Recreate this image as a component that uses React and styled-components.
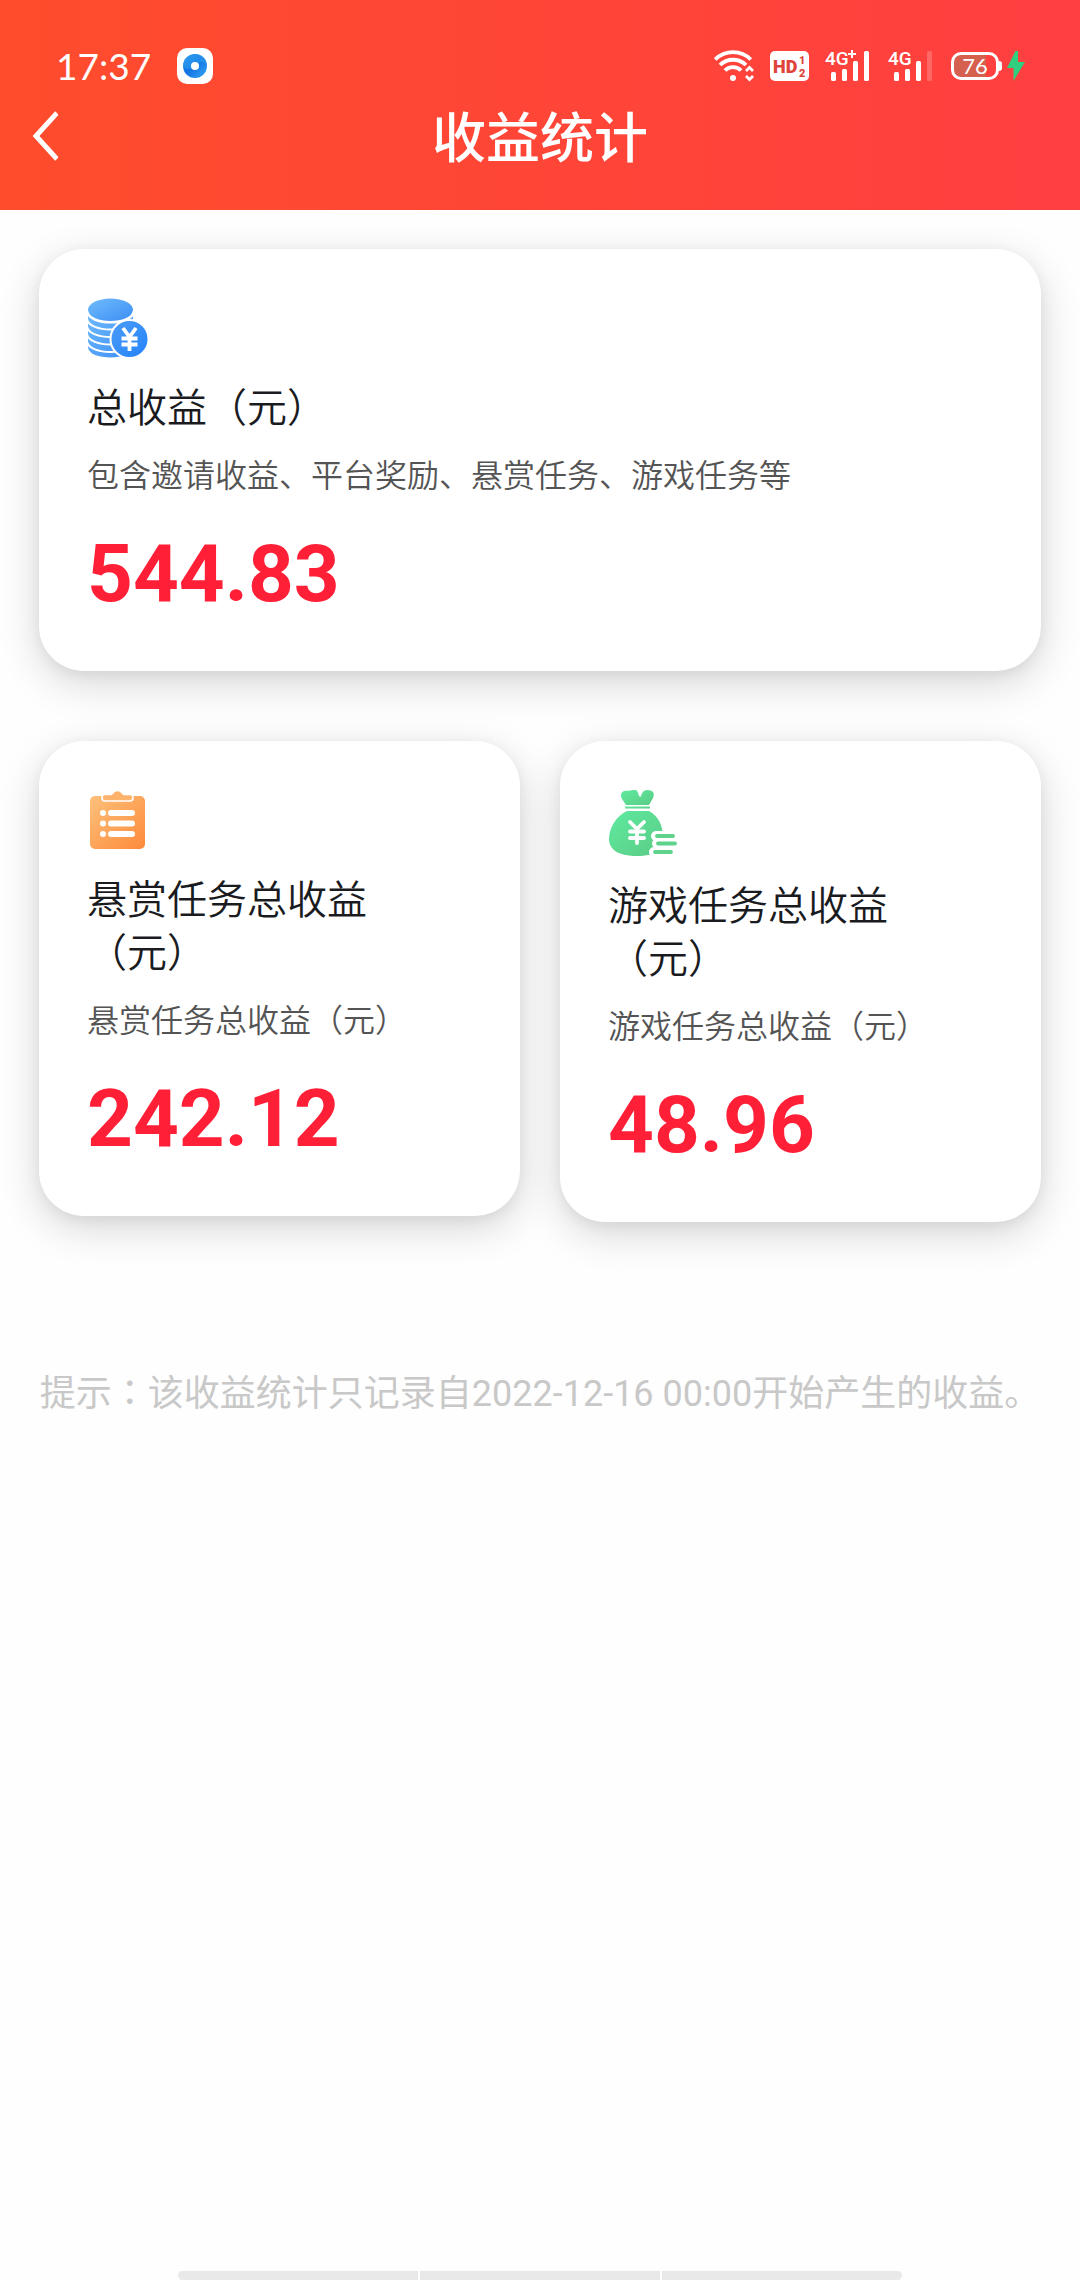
import React from "react";
import styled, { createGlobalStyle } from "styled-components";

const GlobalStyle = createGlobalStyle`
  * {
    box-sizing: border-box;
  }
  body {
    margin: 0;
    background: #fefefe;
    font-family: Roboto, "Noto Sans CJK SC", sans-serif;
    text-spacing-trim: space-all;
  }
`;

const Page = styled.div`
  display: flex;
  flex-direction: column;
  min-height: 100vh;
`;

const Header = styled.header`
  padding: 44px 0 26px;
  color: #fff;
  background: linear-gradient(90deg, #ff4c2c, #ff3f41);
`;

const StatusBar = styled.div`
  display: flex;
  align-items: center;
  justify-content: space-between;
  height: 44px;
  padding: 0 54px 0 56px;
`;

const StatusGroup = styled.div`
  display: flex;
  align-items: center;
  gap: ${(p) => p.$gap}px;
`;

const Clock = styled.time`
  font-family: Lato, sans-serif;
  font-size: 37px;
  line-height: 44px;
`;

const Battery = styled.div`
  display: flex;
  align-items: center;
`;

const BatteryBody = styled.span`
  display: flex;
  align-items: center;
  justify-content: center;
  width: 48px;
  height: 28px;
  border: 3px solid #fff;
  border-radius: 10px;
  background: linear-gradient(90deg, #d5604f 76%, transparent 76%);
  font-family: Lato, sans-serif;
  font-size: 22px;
  line-height: 22px;
`;

const BatteryTip = styled.span`
  width: 3px;
  height: 10px;
  margin-right: 4px;
  border-radius: 0 3px 3px 0;
  background: #fff;
`;

const NavBar = styled.nav`
  display: grid;
  grid-template-columns: 96px 1fr 96px;
  align-items: center;
  height: 96px;
`;

const BackButton = styled.button`
  display: flex;
  align-items: center;
  height: 96px;
  padding: 0 0 0 30px;
  border: 0;
  background: none;
  color: inherit;
`;

const PageTitle = styled.h1`
  margin: 0;
  padding-top: 8px;
  font-size: 54px;
  font-weight: 500;
  line-height: 72px;
  text-align: center;
`;

const Content = styled.main`
  display: flex;
  flex-direction: column;
  gap: 70px;
  padding: 39px 39px 0;
`;

const CardRow = styled.div`
  display: grid;
  grid-template-columns: 1fr 1fr;
  align-items: start;
  gap: 40px;
`;

const Card = styled.section`
  display: flex;
  flex-direction: column;
  align-items: flex-start;
  padding: 49px 48px;
  border-radius: 45px;
  background: #fff;
  box-shadow: 0 12px 40px rgba(0, 0, 0, 0.16), 0 3px 14px rgba(0, 0, 0, 0.06);
`;

const CardTitle = styled.h2`
  margin: 24px 0 20px;
  color: #1a1b1e;
  font-size: 40px;
  font-weight: 350;
  line-height: 53px;
`;

const CardText = styled.p`
  margin: 0 0 29px;
  color: #545454;
  font-size: 32px;
  font-weight: 350;
  line-height: 42px;
`;

const Amount = styled.strong`
  color: #ff2038;
  font-size: 80px;
  font-weight: 700;
  line-height: 96px;
`;

const Tip = styled.p`
  margin: 74px 0 0;
  color: #c8c8c8;
  font-size: 36px;
  line-height: 48px;
  text-align: center;
  white-space: nowrap;
`;

const TipColon = styled.span`
  font-family: "Noto Sans CJK TC", sans-serif;
`;

const GestureBar = styled.div`
  display: flex;
  gap: 2px;
  width: 67%;
  height: 9px;
  margin: auto auto 0;
  border-radius: 6px;
  overflow: hidden;
`;

const GestureSegment = styled.span`
  flex: 1;
  background: #e9e9e9;
`;

const AppBadge = () => (
  <svg width="36" height="36" viewBox="0 0 36 36" aria-hidden="true">
    <defs>
      <linearGradient id="badge" x1="0" y1="0" x2="1" y2="1">
        <stop offset="0" stopColor="#2b9af3" />
        <stop offset="0.45" stopColor="#1173e0" />
        <stop offset="1" stopColor="#35a5f5" />
      </linearGradient>
    </defs>
    <rect width="36" height="36" rx="10" fill="#fff" />
    <circle cx="18" cy="18" r="12" fill="url(#badge)" />
    <path d="M6 18a12 12 0 0 1 12-12c7 0 11 5 12 10-4-3-8-3-12 2-4 4-8 4-12 0z" fill="#2f9cf0" opacity=".6" />
    <circle cx="18" cy="18" r="4" fill="#fff" />
  </svg>
);

const WifiIcon = () => (
  <svg width="40" height="32" viewBox="0 0 40 32" fill="none" stroke="#fff" strokeWidth="3.8" aria-hidden="true">
    <path d="M1.200 9.500C11-.300 27-.300 36.800 9.500" />
    <path d="M6 15C13 8 25 8 32 15" />
    <path d="M11 20.500c4-4.500 12-4.500 16 0" />
    <circle cx="19" cy="28" r="3" fill="#fff" stroke="none" />
    <path d="M32 21l3.500-3.500L39 21M32 26l3.500 3.500L39 26" strokeWidth="2.800" />
  </svg>
);

const HdIcon = () => (
  <svg width="39" height="30" viewBox="0 0 39 30" role="img" aria-label="HD 1 2">
    <rect width="39" height="30" rx="5" fill="#fff" />
    <g fill="#e0433a" fontFamily="Roboto, sans-serif" fontWeight="900">
      <text x="3" y="22" fontSize="18">HD</text>
      <text x="29" y="13" fontSize="11">1</text>
      <text x="29" y="26" fontSize="11">2</text>
    </g>
  </svg>
);

const SignalIcon = ({ label, last }) => (
  <svg width="47" height="40" viewBox="0 -4 47 40" role="img" aria-label={label}>
    <g fill="#fff">
      <rect x="6" y="22" width="5" height="9" rx="1.500" />
      <rect x="17" y="19" width="5" height="12" rx="1.500" />
      <rect x="28" y="11" width="5" height="20" rx="1.500" />
      <rect x="39" y="1" width="5" height="30" rx="1.500" opacity={last} />
      <text x="0" y="15" fontFamily="Roboto, sans-serif" fontSize="19" fontWeight="500">
        {label.slice(0, 2)}
      </text>
      {label.length > 2 && <path d="M26 0h2v3h3v2h-3v3h-2v-3h-3v-2h3z" />}
    </g>
  </svg>
);

const BoltIcon = () => (
  <svg width="20" height="32" viewBox="0 0 20 32" aria-hidden="true">
    <path d="M9.500 1L1 18h6.500v13L19 12h-7V1z" fill="#2fcf7f" />
  </svg>
);

const BackIcon = () => (
  <svg width="28" height="50" viewBox="0 0 28 50" fill="none" stroke="#fff" strokeWidth="5" aria-hidden="true">
    <path d="M27 2L6 25l21 23" />
  </svg>
);

const CoinsIcon = () => (
  <svg width="62" height="60" viewBox="-1 0 62 60" aria-hidden="true">
    <defs>
      <linearGradient id="coins" x1="0" y1="0" x2="1" y2="1">
        <stop offset="0" stopColor="#71bcfb" />
        <stop offset="1" stopColor="#3b8df5" />
      </linearGradient>
      <linearGradient id="coin" x1="0" y1="0" x2="1" y2="1">
        <stop offset="0" stopColor="#4c9df6" />
        <stop offset="1" stopColor="#2382fb" />
      </linearGradient>
    </defs>
    <path d="M0 12h45v37c0 14-45 14-45 0z" fill="url(#coins)" />
    <ellipse cx="22.500" cy="12" rx="22.500" ry="11.500" fill="url(#coins)" />
    <g fill="none" stroke="#fff" strokeWidth="2.600">
      <path d="M-1 13c2 15 45 15 47 0" />
      <path d="M-1 21c2 14 45 14 47 0" strokeWidth="2" />
      <path d="M-1 28.500c2 14 45 14 47 0" strokeWidth="2" />
      <path d="M-1 36c2 14 45 14 47 0" strokeWidth="2" />
      <path d="M-1 43.500c2 14 45 14 47 0" strokeWidth="2" />
    </g>
    <circle cx="41.500" cy="41" r="19" fill="url(#coin)" stroke="#fff" strokeWidth="2" />
    <path d="M35 30l6.500 9 6.500-9M41.500 39v14M33.500 40.500h16M33.500 46.500h16" fill="none" stroke="#fff" strokeWidth="3.800" />
  </svg>
);

const ClipboardIcon = () => (
  <svg width="62" height="60" viewBox="-1 0 62 60" aria-hidden="true">
    <defs>
      <linearGradient id="board" x1="0" y1="0" x2="1" y2="1">
        <stop offset="0" stopColor="#fdc17c" />
        <stop offset="1" stopColor="#fd8a3a" />
      </linearGradient>
    </defs>
    <rect x="2" y="6" width="55" height="53" rx="5" fill="url(#board)" />
    <path
      d="M17 4.500h6c1.500 0 2-4 6.500-4s5 4 6.500 4h6c4 0 4 6.500 0 6.500H17c-4 0-4-6.500 0-6.500z"
      fill="#fdb36c"
      stroke="#fff"
      strokeWidth="1.600"
    />
    <g fill="#fff">
      <circle cx="15" cy="23" r="3" />
      <circle cx="15" cy="33.500" r="3" />
      <circle cx="15" cy="44" r="3" />
      <rect x="20" y="20" width="27" height="6" rx="3" />
      <rect x="20" y="30.500" width="27" height="6" rx="3" />
      <rect x="20" y="41" width="27" height="6" rx="3" />
    </g>
  </svg>
);

const MoneyBagIcon = () => (
  <svg width="70" height="66" viewBox="-1 0 70 66" aria-hidden="true">
    <defs>
      <linearGradient id="bag" x1="0" y1="0" x2="1" y2="1">
        <stop offset="0" stopColor="#5eeaa0" />
        <stop offset="1" stopColor="#5ccb85" />
      </linearGradient>
    </defs>
    <g fill="url(#bag)">
      <path d="M17 15L13 9C10 3 14 0 19 1c3-1 4-1 7-1s3 3 4 6c1 1 2 1 2 0 1-4 3-6 6-6 6 0 8 3 6 8l-4 7z" />
      <path d="M16 16.500h25v2H16z" />
      <path d="M18 21h22c9 5 14 14 14 27 0 12-8 18-26 18S0 60 0 49s7-23 18-28z" />
    </g>
    <path d="M21 32l7 7 7-7M28 39v14M21 41.500h14M21 48h14" fill="none" stroke="#fff" strokeWidth="3.800" strokeLinecap="round" />
    <path d="M47 46h18M48 53.500h18M45 62h18" stroke="#fff" strokeWidth="10" strokeLinecap="round" />
    <path d="M48 46h16M49 53.500h17M46 62h16" stroke="#5fd28c" strokeWidth="3.800" strokeLinecap="round" />
  </svg>
);

function StatCard({ icon, title, text, amount }) {
  return (
    <Card>
      {icon}
      <CardTitle>{title}</CardTitle>
      <CardText>{text}</CardText>
      <Amount>{amount}</Amount>
    </Card>
  );
}

export default function App() {
  return (
    <Page>
      <GlobalStyle />
      <Header>
        <StatusBar>
          <StatusGroup $gap={26}>
            <Clock>17:37</Clock>
            <AppBadge />
          </StatusGroup>
          <StatusGroup $gap={16}>
            <WifiIcon />
            <HdIcon />
            <SignalIcon label="4G+" last={1} />
            <SignalIcon label="4G" last={0.2} />
            <Battery>
              <BatteryBody>76</BatteryBody>
              <BatteryTip />
              <BoltIcon />
            </Battery>
          </StatusGroup>
        </StatusBar>
        <NavBar>
          <BackButton type="button" aria-label="返回">
            <BackIcon />
          </BackButton>
          <PageTitle>收益统计</PageTitle>
        </NavBar>
      </Header>
      <Content>
        <StatCard
          icon={<CoinsIcon />}
          title="总收益（元）"
          text="包含邀请收益、平台奖励、悬赏任务、游戏任务等"
          amount="544.83"
        />
        <CardRow>
          <StatCard
            icon={<ClipboardIcon />}
            title="悬赏任务总收益（元）"
            text="悬赏任务总收益（元）"
            amount="242.12"
          />
          <StatCard
            icon={<MoneyBagIcon />}
            title="游戏任务总收益（元）"
            text="游戏任务总收益（元）"
            amount="48.96"
          />
        </CardRow>
        <Tip>
          提示<TipColon>：</TipColon>该收益统计只记录自2022-12-16 00:00开始产生的收益。
        </Tip>
      </Content>
      <GestureBar>
        <GestureSegment />
        <GestureSegment />
        <GestureSegment />
      </GestureBar>
    </Page>
  );
}
